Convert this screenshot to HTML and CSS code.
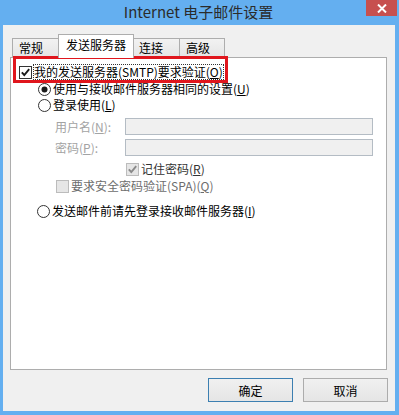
FILE: index.html
```html
<!DOCTYPE html>
<html lang="zh-CN">
<head>
<meta charset="utf-8">
<title>Internet 电子邮件设置</title>
<link rel="stylesheet" href="styles.css">
</head>
<body>
<div class="window">
  <div class="titlebar">
    <span class="title">Internet 电子邮件设置</span>
    <div class="close">
      <svg width="10" height="9" viewBox="0 0 10 9"><path d="M1 0.5 L9 8.5 M9 0.5 L1 8.5" stroke="#fff" stroke-width="2" fill="none"/></svg>
    </div>
  </div>
  <div class="client">
    <div class="tabs">
      <div class="tab t1">常规</div>
      <div class="tab active">发送服务器</div>
      <div class="tab t3">连接</div>
      <div class="tab t4">高级</div>
    </div>
    <div class="panel">
      <div class="highlight"></div>
      <div class="row row1 ind-chk">
        <svg class="box" width="13" height="13" viewBox="0 0 13 13"><rect x="0.5" y="0.5" width="12" height="12" fill="#fff" stroke="#333"/><path d="M2.8 6.4 L5.3 9 L10.2 3.2" fill="none" stroke="#1a1a1a" stroke-width="1.9"/></svg>
        <span class="label focus">我的发送服务器(SMTP)要求验证(<u>O</u>)</span>
      </div>
      <div class="row row2 ind-radio">
        <svg class="box" width="13" height="13" viewBox="0 0 13 13"><circle cx="6.5" cy="6.5" r="6" fill="#fff" stroke="#333"/><circle cx="6.5" cy="6.5" r="3" fill="#1a1a1a"/></svg>
        <span class="label">使用与接收邮件服务器相同的设置(<u>U</u>)</span>
      </div>
      <div class="row row3 ind-radio">
        <svg class="box" width="13" height="13" viewBox="0 0 13 13"><circle cx="6.5" cy="6.5" r="6" fill="#fff" stroke="#333"/></svg>
        <span class="label">登录使用(<u>L</u>)</span>
      </div>
      <div class="row field row4 ind-field">
        <span class="flabel">用户名(<u>N</u>):</span>
        <div class="input"></div>
      </div>
      <div class="row field row5 ind-field">
        <span class="flabel">密码(<u>P</u>):</span>
        <div class="input"></div>
      </div>
      <div class="row row6 ind-remember">
        <svg class="box" width="13" height="13" viewBox="0 0 13 13"><rect x="0.5" y="0.5" width="12" height="12" fill="#e6e6e6" stroke="#bcbcbc"/><path d="M2.8 6.4 L5.3 9 L10.2 3.2" fill="none" stroke="#8a8a8a" stroke-width="1.9"/></svg>
        <span class="label dim1">记住密码(<u>R</u>)</span>
      </div>
      <div class="row row7 ind-spa">
        <svg class="box" width="13" height="13" viewBox="0 0 13 13"><rect x="0.5" y="0.5" width="12" height="12" fill="#e6e6e6" stroke="#bcbcbc"/></svg>
        <span class="label dim2">要求安全密码验证(SPA)(<u>Q</u>)</span>
      </div>
      <div class="row row8 ind-radio3">
        <svg class="box" width="13" height="13" viewBox="0 0 13 13"><circle cx="6.5" cy="6.5" r="6" fill="#fff" stroke="#333"/></svg>
        <span class="label">发送邮件前请先登录接收邮件服务器(<u>I</u>)</span>
      </div>
    </div>
    <div class="buttons">
      <div class="btn default">确定</div>
      <div class="btn">取消</div>
    </div>
  </div>
</div>
</body>
</html>
```
FILE: styles.css
```css
html, body {
  margin: 0;
  padding: 0;
}
body {
  font-family: "Noto Sans CJK SC", "Liberation Sans", sans-serif;
  font-size: 12px;
  color: #000;
}
.window {
  width: 399px;
  height: 415px;
  background: #64aff0;
  display: flex;
  flex-direction: column;
  box-sizing: border-box;
}
.titlebar {
  height: 25px;
  position: relative;
  display: flex;
  justify-content: center;
  align-items: center;
}
.title {
  font-size: 15px;
  color: #2b2b2b;
  line-height: 20px;
  margin-top: -1px;
  margin-left: -2px;
}
.close {
  position: absolute;
  top: 0;
  right: 2px;
  width: 31px;
  height: 16px;
  background: #c7504f;
  display: flex;
  align-items: center;
  justify-content: center;
}
.client {
  flex: 1;
  margin: 0 4px 4px 3px;
  background: #f0f0f0;
  padding: 9px 8px 9px 7px;
  display: flex;
  flex-direction: column;
}
.tabs {
  display: flex;
  align-items: flex-end;
  height: 23px;
  padding-left: 2px;
}
.tab {
  box-sizing: border-box;
  height: 19px;
  border: 1px solid #adadad;
  border-bottom: none;
  background: linear-gradient(#f2f2f2, #e5e5e5);
  padding-left: 6px;
  line-height: 18px;
  white-space: nowrap;
}
.t1 { width: 48px; }
.t3 { width: 48px; }
.t4 { width: 46px; margin-left: -1px; }
.tab.active {
  width: 76px;
  height: 24px;
  margin: 0 -2px -1px;
  background: #fff;
  position: relative;
  z-index: 1;
  padding-left: 0;
  text-align: center;
  line-height: 19px;
}
.panel {
  box-sizing: border-box;
  height: 313px;
  border: 1px solid #adadad;
  background: #fff;
  position: relative;
  display: flex;
  flex-direction: column;
  padding-top: 6px;
}
.highlight {
  position: absolute;
  left: 2px;
  top: -2px;
  width: 215px;
  height: 27px;
  box-sizing: border-box;
  border: 3px solid #e0161d;
}
.row {
  display: flex;
  align-items: center;
  height: 16px;
  white-space: nowrap;
}
.box {
  flex: none;
}
.label {
  margin-left: 2px;
  line-height: 14px;
}
.focus {
  outline: 1px dotted #333;
  outline-offset: 0;
  margin-left: 2px;
}
.ind-chk { padding-left: 8px; }
.ind-radio { padding-left: 27px; }
.ind-radio3 { padding-left: 26px; }
.ind-field { padding-left: 44px; }
.ind-remember { padding-left: 115px; }
.ind-spa { padding-left: 45px; }
.row2 { margin-top: 1px; }
.row3 { margin-top: 0; }
.row4 { margin-top: 5px; height: 17px; }
.row5 { margin-top: 4px; height: 17px; }
.row6 { margin-top: 5px; }
.row7 { margin-top: 1px; }
.row8 { margin-top: 9px; }
.flabel {
  width: 70px;
  color: #a3a3a3;
  flex: none;
}
.input {
  width: 248px;
  height: 17px;
  box-sizing: border-box;
  border: 1px solid #b4bcc4;
  background: #f0f0f0;
}
.dim1 { color: #333; }
.dim2 { color: #6d6d6d; }
.buttons {
  display: flex;
  justify-content: flex-end;
  gap: 10px;
  margin-top: 8px;
  margin-right: -1px;
}
.btn {
  box-sizing: border-box;
  width: 85px;
  height: 24px;
  border: 1px solid #acacac;
  background: linear-gradient(#f0f0f0, #e5e5e5);
  display: flex;
  align-items: center;
  justify-content: center;
  font-size: 12px;
}
.btn.default {
  border-color: #3c7fb1;
}
```
